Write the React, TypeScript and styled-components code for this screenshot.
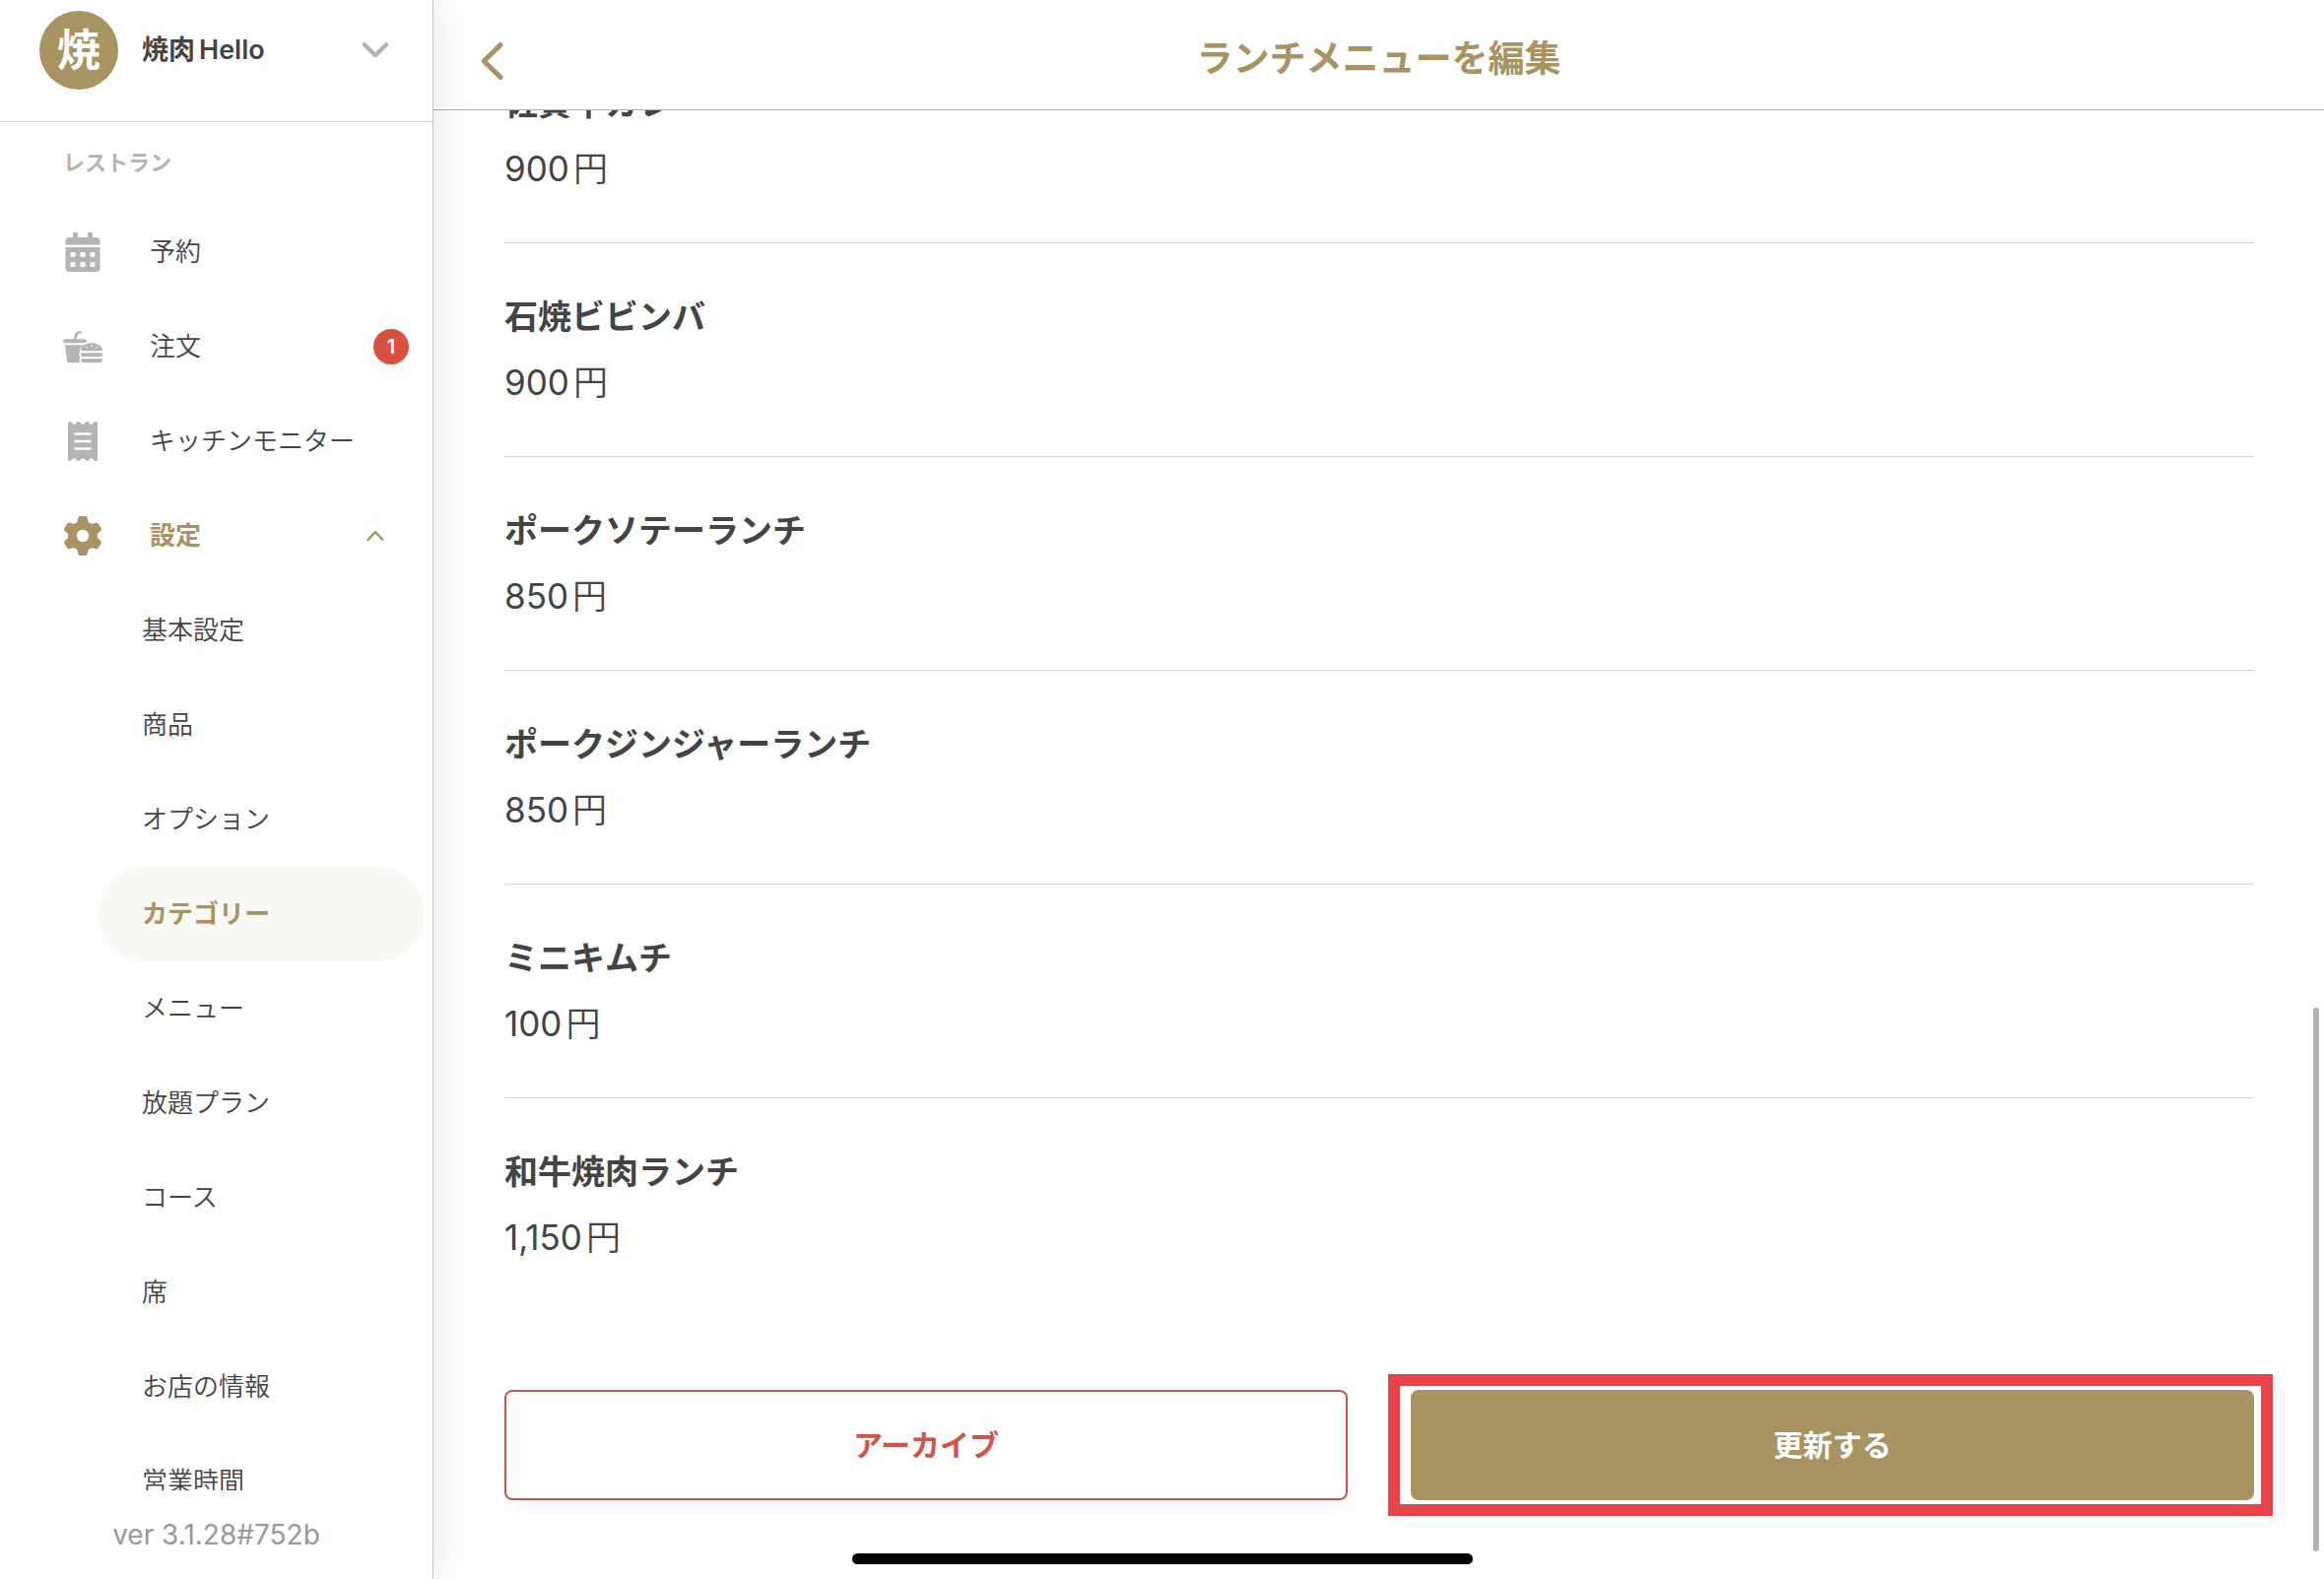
import React from "react";
import styled, { createGlobalStyle, css } from "styled-components";
import { FaCalendarAlt } from "react-icons/fa";
import { FaGear, FaReceipt } from "react-icons/fa6";

const gold = "#a89462";
const ink = "#444444";
const muted = "#b4b4b4";
const red = "#c8584a";
const paper = "#fefefe";

const GlobalStyle = createGlobalStyle`
  *, *::before, *::after { box-sizing: border-box; }
  body {
    margin: 0;
    background: ${paper};
    color: ${ink};
    font-family: Inter, "Noto Sans CJK JP", sans-serif;
    font-size: 26px;
    line-height: 40px;
  }
  button { font: inherit; color: inherit; background: none; border: 0; padding: 0; cursor: pointer; }
  a { color: inherit; text-decoration: none; }
  ul { list-style: none; margin: 0; padding: 0; }
  h1, h2, p { margin: 0; font: inherit; }
  svg { display: block; }
`;

const Shell = styled.div`
  display: grid;
  grid-template-columns: 440px minmax(0, 1fr);
  height: 100vh;
  overflow: hidden;
`;

const Sidebar = styled.aside`
  position: relative;
  z-index: 1;
  display: flex;
  flex-direction: column;
  min-height: 0;
  background: ${paper};
  border-right: 1px solid #c6c6c6;
  box-shadow: 0 0 40px rgba(0, 0, 0, 0.1);
`;

const StoreSwitcher = styled.button`
  display: flex;
  flex: none;
  align-items: center;
  gap: 24px;
  height: 124px;
  padding: 0 44px 22px 40px;
  border-bottom: 1px solid #d2d2d2;
  text-align: left;
`;

const Avatar = styled.span`
  display: grid;
  place-items: center;
  width: 80px;
  height: 80px;
  border-radius: 50%;
  background: ${gold};
  color: #fff;
  font-size: 44px;
  font-weight: 700;
  line-height: 80px;
`;

const StoreName = styled.span`
  display: flex;
  flex: 1;
  align-items: baseline;
  gap: 4px;
  font-size: 27px;
  font-weight: 600;
`;

const SectionLabel = styled.h2`
  flex: none;
  padding: 0 0 2px 64px;
  color: ${muted};
  font-size: 22px;
  font-weight: 700;
  line-height: 82px;
`;

const Nav = styled.nav`
  flex: 1;
  min-height: 0;
  overflow: hidden;
`;

const activeText = css`
  color: ${gold};
  font-weight: 700;
`;

const NavLink = styled.a<{ $active?: boolean }>`
  display: grid;
  grid-template-columns: 40px 1fr auto;
  align-items: center;
  column-gap: 48px;
  height: 96px;
  padding: 0 24px 0 64px;
  font-weight: 350;
  ${(p) => p.$active && activeText}
`;

const NavIcon = styled.span<{ $active?: boolean }>`
  display: grid;
  place-items: center;
  color: ${(p) => (p.$active ? gold : muted)};
`;

const Expander = styled.span`
  padding-right: 25px;
`;

const Badge = styled.span`
  display: grid;
  place-items: center;
  width: 36px;
  height: 36px;
  border-radius: 50%;
  background: #d8513d;
  color: #fff;
  font-size: 20px;
  font-weight: 600;
  line-height: 36px;
`;

const SubLink = styled.a<{ $active?: boolean }>`
  display: block;
  height: 96px;
  margin: 0 8px 0 100px;
  padding-left: 44px;
  border-radius: 48px;
  font-weight: 350;
  line-height: 96px;
  ${(p) =>
    p.$active &&
    css`
      ${activeText}
      background: #f9f8f4;
    `}
`;

const Version = styled.p`
  flex: none;
  color: #999999;
  font-size: 28px;
  line-height: 90px;
  text-align: center;
`;

const Main = styled.main`
  position: relative;
  display: flex;
  flex-direction: column;
  min-height: 0;
`;

const TopBar = styled.header`
  display: grid;
  flex: none;
  grid-template-columns: 1fr auto 1fr;
  align-items: center;
  height: 112px;
  padding: 8px 48px 0;
  border-bottom: 1px solid #b0b0b0;
`;

const BackButton = styled.button`
  justify-self: start;
  padding-top: 4px;
`;

const Title = styled.h1`
  color: ${gold};
  font-size: 37px;
  font-weight: 700;
  line-height: 56px;
`;

const ScrollArea = styled.div`
  display: flex;
  flex: 1;
  flex-direction: column;
  justify-content: flex-end;
  gap: 80px;
  min-height: 0;
  overflow: hidden;
  padding: 0 71px 80px 72px;
`;

const DishRow = styled.li`
  display: grid;
  row-gap: 16px;
  padding: 50px 0;

  &:not(:last-child) {
    border-bottom: 1px solid #d6d6d6;
  }
`;

const DishName = styled.h2`
  font-size: 34px;
  font-weight: 700;
  line-height: 50px;
`;

const Price = styled.p`
  display: flex;
  gap: 4px;
  font-size: 35px;
  line-height: 50px;
`;

const Unit = styled.span`
  font-weight: 350;
`;

const Actions = styled.div`
  display: grid;
  grid-template-columns: 1fr 1fr;
  column-gap: 64px;
`;

const ActionButton = styled.button<{ $primary?: boolean }>`
  width: 100%;
  height: 112px;
  border-radius: 8px;
  border: 2px solid ${(p) => (p.$primary ? gold : red)};
  background: ${(p) => (p.$primary ? gold : paper)};
  color: ${(p) => (p.$primary ? "#fff" : red)};
  font-size: 30px;
  font-weight: 700;
`;

const Highlighted = styled.div`
  position: relative;

  &::after {
    content: "";
    position: absolute;
    inset: -16px -19px -16px -23px;
    border: 12px solid #e8454b;
    pointer-events: none;
  }
`;

const ScrollThumb = styled.div`
  position: absolute;
  right: 5px;
  bottom: 28px;
  width: 6px;
  height: 552px;
  border-radius: 3px;
  background: #b2b2b2;
`;

const HomeIndicator = styled.div`
  position: fixed;
  z-index: 2;
  bottom: 15px;
  left: 50%;
  width: 630px;
  height: 11px;
  border-radius: 6px;
  background: #000;
  transform: translateX(-50%);
`;

const ChevronDown = () => (
  <svg width="28" height="18" viewBox="0 0 28 18" fill="none" stroke={muted} strokeWidth="4.4" strokeLinecap="round" strokeLinejoin="round">
    <path d="M3 3.2 14 14.2 25 3.2" />
  </svg>
);

const ChevronUp = () => (
  <svg width="18" height="12" viewBox="0 0 18 12" fill="none" stroke={gold} strokeWidth="2.4" strokeLinejoin="round">
    <path d="M1 10.5 9 2.2 17 10.5" />
  </svg>
);

const ChevronLeft = () => (
  <svg width="23" height="40" viewBox="0 0 23 40" fill="none" stroke={gold} strokeWidth="5" strokeLinecap="round" strokeLinejoin="round">
    <path d="M20 3.6 3.2 20 20 36.4" />
  </svg>
);

const MealIcon = () => (
  <svg width="40" height="33" viewBox="0 0 120 98" fill="currentColor">
    <path d="M36 28 40 11Q42 4 49 4H53" fill="none" stroke="currentColor" strokeWidth="8" strokeLinecap="round" />
    <rect x="0" y="24" width="72" height="12" rx="6" />
    <path d="M6 42H66L63 44C53 48 49 58 51 64C48 69 49 75 52 78C48 83 49 92 53 96H20Q12 96 11.500 88Z" />
    <path d="M58 60C54 60 53 56 55 52C60 42 72 36 87 36S114 42 119 52C121 56 120 60 116 60Z" />
    <rect x="54" y="66" width="66" height="12" rx="6" />
    <path d="M58 84H116Q120 84 120 87Q119 96 109 96H65Q55 96 54 87Q54 84 58 84Z" />
    <g fill={paper}>
      <circle cx="72" cy="49" r="2.500" />
      <circle cx="87" cy="45" r="2.500" />
      <circle cx="102" cy="49" r="2.500" />
    </g>
  </svg>
);

const settings = [
  "基本設定",
  "商品",
  "オプション",
  "カテゴリー",
  "メニュー",
  "放題プラン",
  "コース",
  "席",
  "お店の情報",
  "営業時間",
];

const dishes = [
  { name: "佐賀牛カレー", price: 900 },
  { name: "石焼ビビンバ", price: 900 },
  { name: "ポークソテーランチ", price: 850 },
  { name: "ポークジンジャーランチ", price: 850 },
  { name: "ミニキムチ", price: 100 },
  { name: "和牛焼肉ランチ", price: 1150 },
];

export default function App() {
  return (
    <>
      <GlobalStyle />
      <Shell>
        <Sidebar>
          <StoreSwitcher type="button">
            <Avatar>焼</Avatar>
            <StoreName>
              <span>焼肉</span>
              <span>Hello</span>
            </StoreName>
            <ChevronDown />
          </StoreSwitcher>
          <SectionLabel>レストラン</SectionLabel>
          <Nav>
            <NavLink href="#reservations">
              <NavIcon><FaCalendarAlt size={40} /></NavIcon>
              予約
            </NavLink>
            <NavLink href="#orders">
              <NavIcon><MealIcon /></NavIcon>
              注文
              <Badge>1</Badge>
            </NavLink>
            <NavLink href="#kitchen">
              <NavIcon><FaReceipt size={40} /></NavIcon>
              キッチンモニター
            </NavLink>
            <NavLink href="#settings" $active>
              <NavIcon $active><FaGear size={40} /></NavIcon>
              設定
              <Expander><ChevronUp /></Expander>
            </NavLink>
            {settings.map((label) => (
              <SubLink key={label} href="#settings" $active={label === "カテゴリー"}>
                {label}
              </SubLink>
            ))}
          </Nav>
          <Version>ver 3.1.28#752b</Version>
        </Sidebar>

        <Main>
          <TopBar>
            <BackButton type="button" aria-label="戻る"><ChevronLeft /></BackButton>
            <Title>ランチメニューを編集</Title>
          </TopBar>
          <ScrollArea>
            <ul>
              {dishes.map((dish) => (
                <DishRow key={dish.name}>
                  <DishName>{dish.name}</DishName>
                  <Price>
                    <span>{dish.price.toLocaleString("en-US")}</span>
                    <Unit>円</Unit>
                  </Price>
                </DishRow>
              ))}
            </ul>
            <Actions>
              <ActionButton type="button">アーカイブ</ActionButton>
              <Highlighted>
                <ActionButton type="button" $primary>更新する</ActionButton>
              </Highlighted>
            </Actions>
          </ScrollArea>
          <ScrollThumb />
        </Main>
      </Shell>
      <HomeIndicator />
    </>
  );
}
